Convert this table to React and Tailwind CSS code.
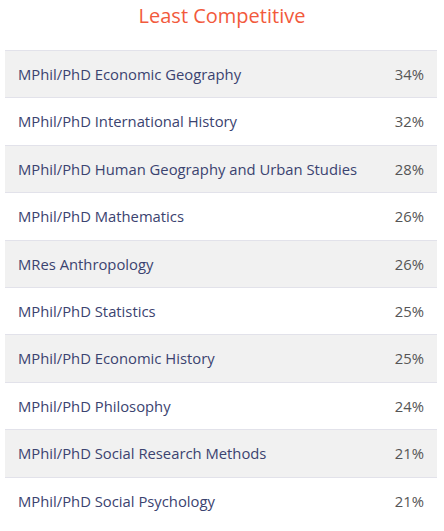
export default function App() {
  const rows = [
    ["MPhil/PhD Economic Geography", "34%"],
    ["MPhil/PhD International History", "32%"],
    ["MPhil/PhD Human Geography and Urban Studies", "28%"],
    ["MPhil/PhD Mathematics", "26%"],
    ["MRes Anthropology", "26%"],
    ["MPhil/PhD Statistics", "25%"],
    ["MPhil/PhD Economic History", "25%"],
    ["MPhil/PhD Philosophy", "24%"],
    ["MPhil/PhD Social Research Methods", "21%"],
    ["MPhil/PhD Social Psychology", "21%"],
  ];
  return (
    <div className="w-[444px] h-[531px] bg-white overflow-hidden" style={{ fontFamily: '"Open Sans", sans-serif' }}>
      <h2 className="text-center text-[20px] leading-[30px] text-[#f25a3c] pt-[1px] h-[50px]">Least Competitive</h2>
      <div className="mx-[5px] w-[432px] border-t border-[#e2e2ea]">
        {rows.map(([name, pct], i) => (
          <div
            key={i}
            className={`flex justify-between items-center px-[13px] h-[47.4px] text-[14.8px] ${i < rows.length - 1 ? "border-b border-[#e2e2ea]" : ""} ${i % 2 === 0 ? "bg-[#f1f1f1]" : "bg-white"}`}
          >
            <span className="text-[#3b4370]">{name}</span>
            <span className="text-[#555]">{pct}</span>
          </div>
        ))}
      </div>
    </div>
  );
}
